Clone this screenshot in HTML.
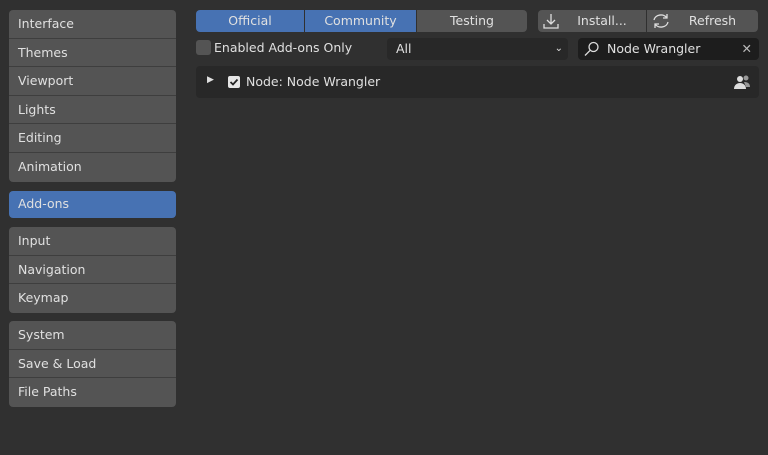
<html><head><style>
body{margin:0;width:768px;height:455px;background:#303030;font-family:"DejaVu Sans","Liberation Sans",sans-serif;font-size:12.5px;color:#e0e0e0;position:relative;overflow:hidden}
.a{position:absolute;box-sizing:border-box}
.grp{left:9px;width:167px;border-radius:4px;overflow:hidden;background:#545454}
.it{height:28.6px;line-height:28px;padding-left:9px;border-bottom:1px solid #3e3e3e;box-sizing:border-box}
.it:last-child{border-bottom:none}
.btn{top:10px;height:22px;line-height:21px;text-align:center;background:#545454}
</style></head><body>
<div class="a grp" style="top:10px;height:172px">
<div class="it">Interface</div><div class="it">Themes</div><div class="it">Viewport</div><div class="it">Lights</div><div class="it">Editing</div><div class="it">Animation</div></div>
<div class="a grp" style="top:191px;height:27px;background:#4772b3"><div class="it" style="line-height:25px">Add-ons</div></div>
<div class="a grp" style="top:227px;height:86px"><div class="it">Input</div><div class="it">Navigation</div><div class="it">Keymap</div></div>
<div class="a grp" style="top:321px;height:86px"><div class="it">System</div><div class="it">Save &amp; Load</div><div class="it">File Paths</div></div>

<div class="a btn" style="left:196px;width:108px;background:#4772b3;border-radius:4px 0 0 4px">Official</div>
<div class="a btn" style="left:305px;width:111px;background:#4772b3">Community</div>
<div class="a btn" style="left:417px;width:110px;border-radius:0 4px 4px 0">Testing</div>
<div class="a btn" style="left:538px;width:108px;border-radius:4px 0 0 4px;padding-left:20px">Install...</div>
<div class="a btn" style="left:647px;width:111px;border-radius:0 4px 4px 0;padding-left:20px">Refresh</div>
<svg class="a" style="left:541px;top:11px" width="20" height="20" viewBox="0 0 20 20" fill="none" stroke="#ddd" stroke-width="1.3"><path d="M10 3v10M6 9l4 4 4-4M3 13v4h14v-4"/></svg>
<svg class="a" style="left:651px;top:11px" width="20" height="20" viewBox="0 0 20 20" fill="none" stroke="#ddd" stroke-width="1.3"><path d="M3 9a7 6 0 0 1 13-2M16 3v4h-4M17 11a7 6 0 0 1-13 2M4 17v-4h4"/></svg>

<div class="a" style="left:196px;top:40px;width:15px;height:15px;background:#545454;border-radius:3px"></div>
<div class="a" style="left:214px;top:39px;line-height:18px">Enabled Add-ons Only</div>
<div class="a" style="left:387px;top:38px;width:181px;height:22px;background:#282828;border-radius:4px;line-height:21px;padding-left:9px">All<span style="position:absolute;right:5px;font-size:10px">⌄</span></div>
<div class="a" style="left:578px;top:38px;width:181px;height:22px;background:#1d1d1d;border-radius:4px;line-height:21px;padding-left:29px">Node Wrangler<span style="position:absolute;right:7px;color:#bbb">✕</span></div>
<svg class="a" style="left:583px;top:40px" width="18" height="18" viewBox="0 0 18 18" fill="none" stroke="#ddd" stroke-width="1.3"><circle cx="10.5" cy="7" r="4.5"/><path d="M7.3 10.2L2 15.5"/></svg>

<div class="a" style="left:196px;top:66px;width:563px;height:32px;background:#282828;border-radius:4px"></div>
<div class="a" style="left:207px;top:75px;font-size:9px">▶</div>
<div class="a" style="left:228px;top:76px;width:12px;height:12px;background:#e6e6e6;border-radius:2px"></div>
<svg class="a" style="left:228px;top:76px" width="12" height="12" viewBox="0 0 12 12" fill="none" stroke="#222" stroke-width="1.8"><path d="M2.5 6l2.5 2.5 4.5-5"/></svg>
<div class="a" style="left:246px;top:73px;line-height:17px">Node: Node Wrangler</div>
<svg class="a" style="left:733px;top:73px" width="18" height="18" viewBox="0 0 18 18" fill="#ddd"><circle cx="7" cy="6" r="3"/><path d="M1 16c0-4 3-6 6-6s6 2 6 6z"/><circle cx="13" cy="5" r="2.5" fill="#999"/><path d="M11 9c3 0 6 1 6 5h-4z" fill="#999"/></svg>
</body></html>
